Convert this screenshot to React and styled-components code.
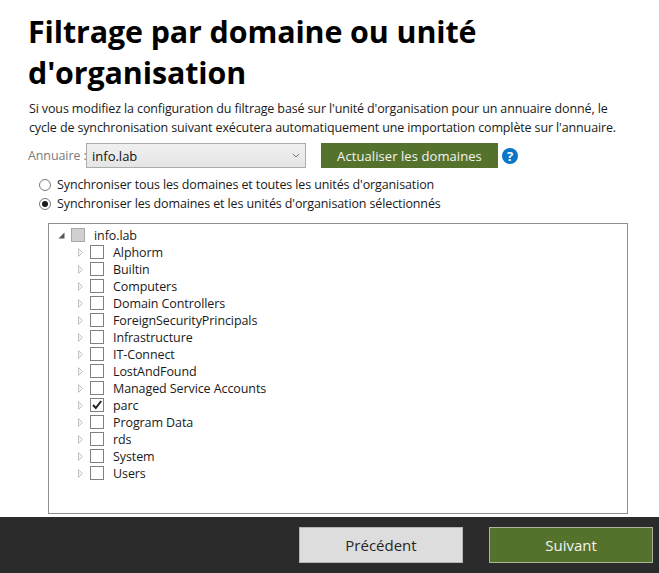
import React from "react";
import styled, { createGlobalStyle } from "styled-components";

const GlobalStyle = createGlobalStyle`
	html, body {
		margin: 0;
		padding: 0;
		background: #fff;
		overflow: hidden;
	}
	body {
		font-family: "Open Sans", "Noto Sans", sans-serif;
		color: #1c1c1c;
	}
`;

const Page = styled.div`
	width: 659px;
	height: 573px;
	display: flex;
	flex-direction: column;
`;

const Content = styled.div`
	flex: 1;
	padding: 11px 0 0 29px;
	min-height: 0;
`;

const Title = styled.h1`
	margin: 0 0 0 -1px;
	width: 560px;
	font-size: 30.4px;
	line-height: 41px;
	font-weight: 700;
	color: #000;
	letter-spacing: -0.1px;
`;

const Intro = styled.p`
	margin: 6px 0 0;
	font-size: 12.5px;
	line-height: 19px;
	letter-spacing: -0.13px;
	white-space: nowrap;
	color: #1a1a1a;
`;

const DirectoryRow = styled.div`
	display: flex;
	align-items: center;
	height: 25px;
	margin-top: 6px;
`;

const FieldLabel = styled.span`
	width: 57px;
	margin-left: -1px;
	padding-right: 1px;
	font-size: 12.5px;
	letter-spacing: -0.1px;
	color: #7a7a7a;
	white-space: nowrap;
`;

const Select = styled.div`
	box-sizing: border-box;
	width: 220px;
	height: 25px;
	display: flex;
	align-items: center;
	justify-content: space-between;
	padding: 0 5px 0 5px;
	border: 1px solid #acacac;
	background: linear-gradient(#f0f0f0, #e5e5e5);
	font-size: 13px;
	color: #111;
`;

const GreenButton = styled.div`
	width: 177px;
	height: 25px;
	margin-left: 15px;
	display: flex;
	align-items: center;
	justify-content: center;
	background: #55722c;
	color: #f4f4f4;
	font-size: 13px;
	letter-spacing: 0.08px;
`;

const Help = styled.svg`
	width: 16px;
	height: 16px;
	margin-left: 4px;
`;

const RadioGroup = styled.div`
	display: flex;
	flex-direction: column;
	margin: 7px 0 0 10px;
`;

const RadioRow = styled.label`
	display: flex;
	align-items: center;
	height: 19px;
	font-size: 12.5px;
	letter-spacing: -0.12px;
	color: #1a1a1a;
`;

const RadioDot = styled.span`
	box-sizing: border-box;
	width: 12px;
	height: 12px;
	margin-right: 6px;
	border: 1px solid #7a7a7a;
	border-radius: 50%;
	background: #fff;
	display: flex;
	align-items: center;
	justify-content: center;
	&::after {
		content: "";
		display: ${(props) => (props.$on ? "block" : "none")};
		width: 6px;
		height: 6px;
		border-radius: 50%;
		background: #1a1a1a;
	}
`;

const TreeBox = styled.div`
	box-sizing: border-box;
	width: 580px;
	height: 291px;
	margin: 10px 0 0 19px;
	padding: 3px 0 0 8px;
	border: 1px solid #8f8f8f;
	background: #fff;
`;

const TreeRow = styled.div`
	display: flex;
	align-items: center;
	height: 17px;
	padding-left: ${(props) => props.$depth * 19}px;
	font-size: 12.5px;
	letter-spacing: -0.09px;
	color: #1a1a1a;
`;

const Arrow = styled.svg`
	width: 9px;
	height: 9px;
	margin-right: 5px;
	flex: none;
`;

const Check = styled.span`
	box-sizing: border-box;
	width: 14px;
	height: 14px;
	margin-right: 9px;
	margin-bottom: 2px;
	border: 1px solid #808080;
	background: #fff;
	display: flex;
	align-items: center;
	justify-content: center;
	flex: none;
`;

const MixedCheck = styled(Check)`
	background: #d0d0d0;
	border-color: #a8a8a8;
`;

const Footer = styled.div`
	height: 56px;
	flex: none;
	background: #2b2b2b;
	display: flex;
	align-items: center;
	justify-content: flex-end;
	gap: 26px;
	padding-right: 6px;
`;

const FooterButton = styled.div`
	box-sizing: border-box;
	width: 164px;
	height: 36px;
	display: flex;
	align-items: center;
	justify-content: center;
	font-size: 15px;
	border: 1px solid ${(props) => (props.$primary ? "#a9b598" : "#b5b5b5")};
	background: ${(props) => (props.$primary ? "#55722c" : "#dddddd")};
	color: ${(props) => (props.$primary ? "#f4f4f4" : "#262626")};
`;

const children = [
	"Alphorm",
	"Builtin",
	"Computers",
	"Domain Controllers",
	"ForeignSecurityPrincipals",
	"Infrastructure",
	"IT-Connect",
	"LostAndFound",
	"Managed Service Accounts",
	"parc",
	"Program Data",
	"rds",
	"System",
	"Users",
];

const Collapsed = () => (
	<Arrow viewBox="0 0 9 9">
		<path d="M2.5 0.5 L6.5 4.5 L2.5 8.5 Z" fill="#f4f4f4" stroke="#c4c4c4" />
	</Arrow>
);

const Expanded = () => (
	<Arrow viewBox="0 0 9 9">
		<path d="M7.5 1.5 V7.5 H1.5 Z" fill="#555" />
	</Arrow>
);

const Tick = () => (
	<svg width="12" height="12" viewBox="0 0 12 12">
		<path d="M2 6 L4.8 9 L10.2 2" fill="none" stroke="#222" strokeWidth="2" />
	</svg>
);

export default function App() {
	return (
		<Page>
			<GlobalStyle />
			<Content>
				<Title>Filtrage par domaine ou unité d'organisation</Title>
				<Intro>
					Si vous modifiez la configuration du filtrage basé sur l'unité d'organisation pour un annuaire donné, le
					<br />
					cycle de synchronisation suivant exécutera automatiquement une importation complète sur l'annuaire.
				</Intro>
				<DirectoryRow>
					<FieldLabel>Annuaire :</FieldLabel>
					<Select>
						info.lab
						<svg width="8" height="5" viewBox="0 0 8 5">
							<path d="M0.8 0.8 L4 4 L7.2 0.8" fill="none" stroke="#777" strokeWidth="1" />
						</svg>
					</Select>
					<GreenButton>Actualiser les domaines</GreenButton>
					<Help viewBox="0 0 16 16">
						<circle cx="8" cy="8" r="8" fill="#0b76c5" />
						<text x="8" y="12.5" textAnchor="middle" fontSize="13" fontWeight="700" fill="#fff" fontFamily="Open Sans">
							?
						</text>
					</Help>
				</DirectoryRow>
				<RadioGroup>
					<RadioRow>
						<RadioDot />
						Synchroniser tous les domaines et toutes les unités d'organisation
					</RadioRow>
					<RadioRow>
						<RadioDot $on />
						Synchroniser les domaines et les unités d'organisation sélectionnés
					</RadioRow>
				</RadioGroup>
				<TreeBox>
					<TreeRow $depth={0}>
						<Expanded />
						<MixedCheck />
						info.lab
					</TreeRow>
					{children.map((name) => (
						<TreeRow $depth={1} key={name}>
							<Collapsed />
							<Check>{name === "parc" && <Tick />}</Check>
							{name}
						</TreeRow>
					))}
				</TreeBox>
			</Content>
			<Footer>
				<FooterButton>Précédent</FooterButton>
				<FooterButton $primary>Suivant</FooterButton>
			</Footer>
		</Page>
	);
}
